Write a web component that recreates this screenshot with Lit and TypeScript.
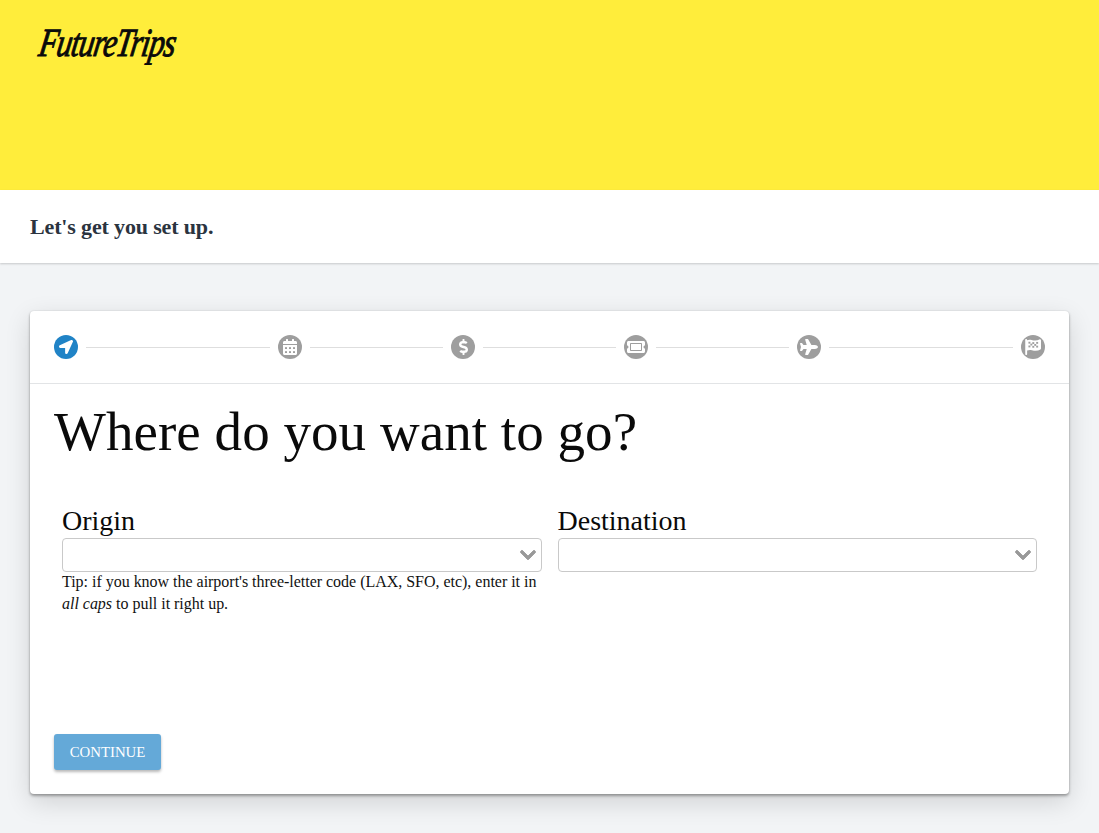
import { LitElement, html, css, svg } from "lit";
import { customElement } from "lit/decorators.js";

const cal = svg`<svg class="ic" viewBox="0 0 448 512" style="width:14px;height:16px"><path fill="#fff" d="M0 464c0 26.5 21.5 48 48 48h352c26.5 0 48-21.5 48-48V192H0v272zM400 64h-48V16c0-8.800-7.200-16-16-16h-32c-8.800 0-16 7.200-16 16v48H160V16c0-8.800-7.200-16-16-16h-32c-8.800 0-16 7.200-16 16v48H48C21.500 64 0 85.500 0 112v48h448v-48c0-26.500-21.500-48-48-48z"/><g fill="#9e9e9e"><rect x="64" y="256" width="64" height="64" rx="12"/><rect x="192" y="256" width="64" height="64" rx="12"/><rect x="320" y="256" width="64" height="64" rx="12"/><rect x="64" y="384" width="64" height="64" rx="12"/><rect x="192" y="384" width="64" height="64" rx="12"/><rect x="320" y="384" width="64" height="64" rx="12"/></g></svg>`;

const icons = [
  svg`<svg class="ic" viewBox="0 0 512 512" style="width:14px;height:14px"><path fill="#fff" d="M444.520 3.520L28.740 195.420c-47.970 22.390-31.980 92.750 19.190 92.750h175.910v175.910c0 51.170 70.360 67.170 92.750 19.190l191.900-415.780c15.990-38.390-25.590-79.970-63.970-63.970z"/></svg>`,
  cal,
  svg`<svg class="ic" viewBox="0 0 288 512" style="width:9px;height:16px"><path fill="#fff" d="M209.200 233.400l-108-31.600C88.700 198.200 80 186.500 80 173.500c0-16.300 13.200-29.500 29.500-29.500h66.300c12.200 0 24.200 3.700 34.200 10.500 6.100 4.100 14.300 3.100 19.500-2l34.800-34c7.100-6.900 6.100-18.400-1.800-24.500C238 74.800 207.400 64.100 176 64V16c0-8.800-7.200-16-16-16h-32c-8.800 0-16 7.200-16 16v48h-2.500C45.800 64-5.400 118.700.5 183.600c4.200 46.100 39.400 83.600 83.800 96.600l102.500 30c12.500 3.700 21.200 15.300 21.200 28.300 0 16.300-13.200 29.500-29.500 29.500h-66.300C100 368 88 364.300 78 357.500c-6.100-4.100-14.300-3.100-19.500 2l-34.800 34c-7.100 6.900-6.100 18.400 1.800 24.500 24.500 19.200 55.100 29.900 86.500 30v48c0 8.800 7.200 16 16 16h32c8.800 0 16-7.200 16-16v-48.200c46.600-.9 90.300-28.600 105.700-72.700 21.500-61.600-14.600-124.800-72.500-141.700z"/></svg>`,
  svg`<svg class="ic" viewBox="0 0 576 512" style="width:18px;height:16px"><path fill="#fff" fill-rule="evenodd" d="M128 160h320v192H128V160zm400 96c0 26.510 21.490 48 48 48v96c0 26.510-21.490 48-48 48H48c-26.510 0-48-21.490-48-48v-96c26.510 0 48-21.490 48-48s-21.490-48-48-48v-96c0-26.510 21.490-48 48-48h480c26.510 0 48 21.490 48 48v96c-26.510 0-48 21.490-48 48zm-48-104c0-13.255-10.745-24-24-24H120c-13.255 0-24 10.745-24 24v208c0 13.255 10.745 24 24 24h336c13.255 0 24-10.745 24-24V152z"/></svg>`,
  svg`<svg class="ic" viewBox="0 0 576 512" style="width:18px;height:16px"><path fill="#fff" d="M480 192H365.710L260.610 8.060A16.014 16.014 0 0 0 246.710 0h-65.500c-10.630 0-18.300 10.170-15.380 20.390L214.860 192H112l-43.200-57.600c-3.020-4.030-7.770-6.400-12.800-6.400H16.010C5.600 128-2.040 137.780.49 147.880L32 256 .49 364.120C-2.040 374.220 5.600 384 16.010 384H56c5.040 0 9.780-2.370 12.800-6.400L112 320h102.860l-49.030 171.600c-2.920 10.220 4.750 20.400 15.380 20.400h65.500c5.740 0 11.040-3.080 13.890-8.060L365.710 320H480c35.350 0 96-28.650 96-64s-60.650-64-96-64z"/></svg>`,
  svg`<svg class="ic" viewBox="0 0 512 512" style="width:16px;height:16px"><path fill="#fff" d="M40 0c18 0 30 14 28 32v8c34-14 70-22 110-14 50 10 90 32 150 24 50-6 96-24 130-36 24-8 54 8 54 36v250c0 14-8 26-20 32-44 22-92 40-150 46-62 6-100-20-156-28-44-6-84 4-118 18v120c0 10-8 24-24 24H28c-12 0-20-10-20-24V48C-4 26 14 0 40 0z"/><g fill="#9e9e9e"><rect x="110" y="88" width="62" height="60"/><rect x="234" y="100" width="62" height="60"/><rect x="358" y="94" width="62" height="60"/><rect x="172" y="148" width="62" height="60"/><rect x="296" y="160" width="62" height="60"/><rect x="110" y="208" width="62" height="60"/><rect x="234" y="220" width="62" height="60"/><rect x="358" y="214" width="62" height="60"/></g></svg>`,
];

const chevron = svg`<svg class="chev" viewBox="0 0 448 512"><path fill="#999" stroke="#999" stroke-width="24" d="M207.029 381.476L12.686 187.132c-9.373-9.373-9.373-24.569 0-33.941l22.667-22.667c9.357-9.357 24.522-9.375 33.901-.04L224 284.505l154.745-154.021c9.379-9.335 24.544-9.317 33.901.04l22.667 22.667c9.373 9.373 9.373 24.569 0 33.941L240.971 381.476c-9.373 9.372-24.569 9.372-33.942 0z"/></svg>`;

@customElement("app-root")
export class AppRoot extends LitElement {
  static styles = css`
    :host { display: block; min-height: 100vh; background: #f2f4f6; font-family: "Liberation Serif", "Times New Roman", serif; color: #0a0a0a; }
    .hero { height: 190px; background: #ffed3b; box-sizing: border-box; padding: 21px 36px; }
    .logo { font-family: "Liberation Serif", serif; font-style: italic; font-weight: 400; font-size: 40px; line-height: 44px; letter-spacing: -1.2px; word-spacing: -9px; -webkit-text-stroke: 1px #0a0a0a; color: #0a0a0a; display: inline-block; transform: scaleX(.77) skewX(-12deg); transform-origin: left bottom; }
    .sub { height: 73px; background: #fff; box-sizing: border-box; padding: 0 30px; display: flex; align-items: center; box-shadow: 0 1px 2px rgba(0,0,0,.18); font-size: 22px; letter-spacing: -.15px; font-weight: 700; color: #2b3440; position: relative; }
    .wrap { padding: 48px 30px 39px; }
    .card { background: #fff; border-radius: 4px; box-shadow: 0 2px 3px rgba(0,0,0,.32), 0 8px 26px rgba(0,0,0,.14), 0 0 2px rgba(0,0,0,.12); height: 483px; display: flex; flex-direction: column; box-sizing: border-box; }
    .stepper { height: 73px; box-sizing: border-box; border-bottom: 1px solid #e2e4e6; padding: 0 24px; display: flex; align-items: center; flex: none; }
    .step { width: 24px; height: 24px; border-radius: 50%; background: #9e9e9e; display: flex; align-items: center; justify-content: center; flex: none; }
    .step.on { background: #2083c6; }
    .ic { display: block; }
    .line { height: 1px; background: #dedede; margin: 0 8px; }
    .line.wide { flex: 184 1 0; }
    .line.reg { flex: 133 1 0; }
    .body { flex: 1; padding: 0 24px 24px; display: flex; flex-direction: column; }
    h1 { margin: 16px 0 0; font-weight: 400; font-size: 55px; line-height: 64px; letter-spacing: .05px; color: #0a0a0a; }
    .cols { display: flex; gap: 16px; padding: 0 8px; margin-top: 39px; flex: 1; }
    .col { flex: 1; min-width: 0; }
    .lab { font-size: 28px; line-height: 36px; height: 35px; }
    .sel { height: 34px; box-sizing: border-box; border: 1px solid #c9c9c9; border-radius: 4px; background: #fff; display: flex; align-items: center; justify-content: flex-end; padding-right: 5px; }
    .chev { width: 16px; height: 18px; display: block; }
    .tip { font-size: 16px; letter-spacing: -.02px; line-height: 22px; margin-top: -1px; color: #111; }
    button { align-self: flex-start; width: 107px; height: 36px; border: 0; border-radius: 3px; background: #64a9d8; color: #fff; font: 400 14.8px "Liberation Serif", serif; box-shadow: 0 2px 3px rgba(0,0,0,.28); padding: 0; }
  `;

  render() {
    return html`
      <div class="hero"><span class="logo">Future Trips</span></div>
      <div class="sub">Let's get you set up.</div>
      <div class="wrap">
        <div class="card">
          <div class="stepper">
            ${icons.map((ic, i) => html`
              <div class="step ${i === 0 ? "on" : ""}">${ic}</div>
              ${i < 5 ? html`<div class="line ${i === 0 || i === 4 ? "wide" : "reg"}"></div>` : ""}
            `)}
          </div>
          <div class="body">
            <h1>Where do you want to go?</h1>
            <div class="cols">
              <div class="col">
                <div class="lab">Origin</div>
                <div class="sel">${chevron}</div>
                <div class="tip">Tip: if you know the airport's three-letter code (LAX, SFO, etc), enter it in <em>all caps</em> to pull it right up.</div>
              </div>
              <div class="col">
                <div class="lab">Destination</div>
                <div class="sel">${chevron}</div>
              </div>
            </div>
            <button>CONTINUE</button>
          </div>
        </div>
      </div>
    `;
  }
}
